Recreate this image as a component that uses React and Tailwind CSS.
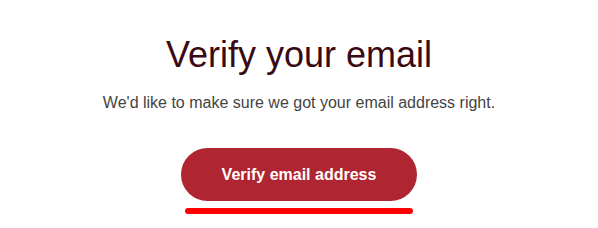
import React from 'react';

function App() {
  return (
    <div className="w-[598px] h-[228px] bg-white flex flex-col items-center" style={{ fontFamily: '"Liberation Sans", Arial, sans-serif' }}>
      <h1 className="mt-[32px] text-[36px] leading-[46px] text-[#3a0a12]">Verify your email</h1>
      <p className="mt-[13px] text-[16px] leading-[24px] text-[#444444]">
        We'd like to make sure we got your email address right.
      </p>
      <div className="mt-[33px] flex flex-col items-center">
        <button className="w-[236px] h-[53px] rounded-full bg-[#af2531] text-white font-bold text-[16px]">
          Verify email address
        </button>
        <div className="mt-[7px] w-[228px] h-[6px] rounded-full bg-[#ff0000]" />
      </div>
    </div>
  );
}

export default App;
